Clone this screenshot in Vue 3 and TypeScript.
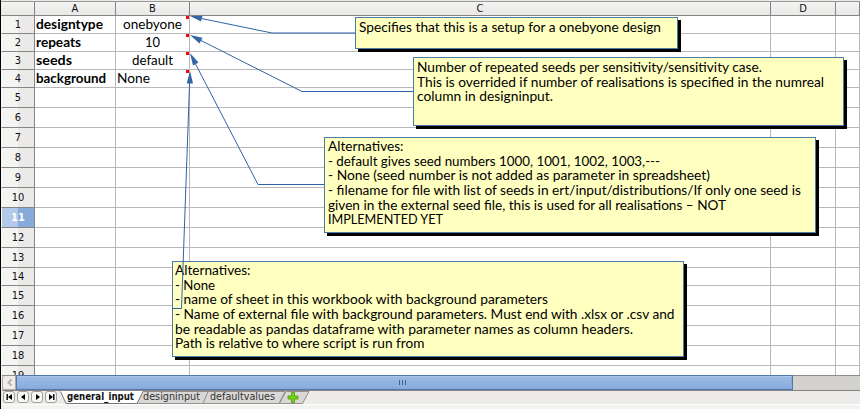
<script setup lang="ts">
interface Line { text: string; width: number; y: number }
interface Note { id: string; w: number; h: number; pad: number; lines: Line[] }

const columns = ['A', 'B', 'C', 'D', '']
const cells: Record<number, [string, string]> = {
  1: ['designtype', 'onebyone'],
  2: ['repeats', '10'],
  3: ['seeds', 'default'],
  4: ['background', 'None'],
}
const cellWidths: Record<number, [number, number]> = {
  1: [67, 59], 2: [45, 15], 3: [36, 41], 4: [70, 33],
}
const rows = Array.from({ length: 19 }, (_, i) => i + 1)
const shortRows = [1, 2, 3, 4, 14]

const notes: Note[] = [
  { id: 'n1', w: 323, h: 32, pad: 4, lines: [
    { text: 'Specifies that this is a setup for a onebyone design', width: 302, y: 15 },
  ] },
  { id: 'n2', w: 431, h: 69, pad: 4, lines: [
    { text: 'Number of repeated seeds per sensitivity/sensitivity case.', width: 345, y: 15 },
    { text: 'This is overrided if number of realisations is specified in the numreal', width: 407, y: 30 },
    { text: 'column in designinput.', width: 136, y: 44 },
  ] },
  { id: 'n3', w: 492, h: 96, pad: 4, lines: [
    { text: 'Alternatives:', width: 75.5, y: 14 },
    { text: '- default gives seed numbers 1000, 1001, 1002, 1003,---', width: 332, y: 29 },
    { text: '- None (seed number is not added as parameter in spreadsheet)', width: 382, y: 43 },
    { text: '- filename for file with list of seeds in ert/input/distributions/If only one seed is', width: 473, y: 58 },
    { text: 'given in the external seed file, this is used for all realisations – NOT', width: 398, y: 73 },
    { text: 'IMPLEMENTED YET', width: 115, y: 87 },
  ] },
  { id: 'n4', w: 512, h: 96, pad: 3, lines: [
    { text: 'Alternatives:', width: 75.5, y: 14 },
    { text: '- None', width: 40, y: 29 },
    { text: '- name of sheet in this workbook with background parameters', width: 373, y: 43 },
    { text: '- Name of external file with background parameters. Must end with .xlsx or .csv and', width: 499.5, y: 58 },
    { text: 'be readable as pandas dataframe with parameter names as column headers.', width: 458, y: 73 },
    { text: 'Path is relative to where script is run from', width: 249.5, y: 87 },
  ] },
]

const connectors = [
  { line: '355,33 272,33 199,18', head: '190,16 202.5,15.8 201,21.5' },
  { line: '413,91.5 302,91.5 198,39', head: '190,35 202.5,37.8 199.5,43.5' },
  { line: '324,184.5 258,184.5 194,61', head: '190,53 198.5,62.5 193,65.5' },
  { line: '172,308.5 181.5,308.5 189.7,80', head: '190,71 193,83.5 186.7,83.5' },
]

const navIcons = [
  'M3.5 3v6h1.4V3zM9 3v6L5 6z',
  'M8 3v6L4 6z',
  'M5 3v6l4-3z',
  'M4 3v6l4-3zM8.1 3v6h1.4V3z',
]
</script>

<template>
  <main class="window">
    <section class="sheet">
      <div class="row header">
        <div class="cell corner"></div>
        <div v-for="(c, i) in columns" :key="i" class="cell col-head">{{ c }}</div>
      </div>
      <div
        v-for="r in rows"
        :key="r"
        class="row"
        :class="{ short: shortRows.includes(r) }"
      >
        <div class="cell row-head" :class="{ active: r === 11 }">{{ r }}</div>
        <div class="cell data bold">
          <svg v-if="cells[r]" :width="cellWidths[r][0]" height="17">
            <text x="0" y="13" :textLength="cellWidths[r][0]" lengthAdjust="spacingAndGlyphs">{{ cells[r][0] }}</text>
          </svg>
        </div>
        <div class="cell data second" :class="{ left: r === 4 }">
          <svg v-if="cells[r]" :width="cellWidths[r][1]" height="17">
            <text x="0" y="13" :textLength="cellWidths[r][1]" lengthAdjust="spacingAndGlyphs">{{ cells[r][1] }}</text>
          </svg>
          <i v-if="cells[r]" class="marker"></i>
        </div>
        <div class="cell data"></div>
        <div class="cell data"></div>
        <div class="cell data"></div>
      </div>

      <div v-for="n in notes" :key="n.id" class="note" :class="n.id">
        <svg :width="n.w - 2" :height="n.h - 2">
          <text
            v-for="l in n.lines"
            :key="l.y"
            :x="n.pad - 1"
            :y="l.y - 1"
            :textLength="l.width"
            lengthAdjust="spacingAndGlyphs"
          >{{ l.text }}</text>
        </svg>
      </div>

      <svg class="connectors" width="860" height="375">
        <g v-for="c in connectors" :key="c.line">
          <polyline :points="c.line" />
          <polygon :points="c.head" />
        </g>
      </svg>
    </section>

    <div class="scrollbar">
      <div class="arrow">
        <svg width="13" height="13"><path d="M8.5 3.5 5.5 6.5l3 3" /></svg>
      </div>
      <div class="thumb"><i></i><i></i><i></i></div>
    </div>

    <footer class="tabs">
      <div class="nav">
        <svg v-for="(d, i) in navIcons" :key="i" width="12" height="12">
          <rect x=".5" y=".5" width="11" height="11" rx="2.5" />
          <path :d="d" />
        </svg>
      </div>
      <svg class="tab-strip" width="254" height="14">
        <path class="tab" d="M82 .5H149L143 12.5H77Z" />
        <path class="tab" d="M148 .5H225L219 12.5H143Z" />
        <path class="tab" d="M226 .5H249L242.5 12.5H219.5Z" />
        <path class="tab selected" d="M.5 0 6 12.5H77L83 0Z" />
        <path class="edge" d="M.5 .5 6 12.5H77L83 .5" />
        <text class="strong" x="7" y="9" textLength="67" lengthAdjust="spacingAndGlyphs">general_input</text>
        <text x="83" y="9" textLength="57" lengthAdjust="spacingAndGlyphs">designinput</text>
        <text x="150" y="9" textLength="65" lengthAdjust="spacingAndGlyphs">defaultvalues</text>
        <path class="plus" d="M231.500 1.500h3v3.500h3.500v3h-3.500v3.500h-3V8H228V5h3.500z" />
      </svg>
    </footer>
  </main>
</template>

<style>
body { background: #f3f2f1; overflow: hidden; }
</style>

<style scoped>
.window {
  box-sizing: border-box;
  width: 860px;
  height: 409px;
  border-left: 1px solid #000;
  background: #f3f3f2;
  overflow: hidden;
  font-family: "DejaVu Sans Condensed", "DejaVu Sans", sans-serif;
}
svg { display: block; }
.sheet {
  position: relative;
  box-sizing: border-box;
  height: 375px;
  padding-top: 1px;
  overflow: hidden;
  background: #ecebea;
}
.row {
  display: grid;
  grid-template-columns: 34px 81px 74px 581px 65px 24px;
  height: 20px;
}
.row.short { height: 18px; }
.row.header { height: 15px; }
.cell {
  box-sizing: border-box;
  border-right: 1px solid #b8b8b8;
  border-bottom: 1px solid #b8b8b8;
}
.header .cell {
  border-top: 1px solid #999;
  border-right-color: #858585;
  border-bottom-color: #858585;
  background: linear-gradient(#f4f4f3, #e9e8e7);
}
.col-head {
  font-size: 11px;
  line-height: 13px;
  text-align: center;
  color: #111;
}
.row-head {
  display: flex;
  align-items: center;
  justify-content: center;
  border-color: #858585;
  border-left: 1px solid #fafafa;
  background: linear-gradient(90deg, #f4f4f3 0 50%, #ebeae9 51%);
  font-size: 11px;
  color: #111;
}
.row-head.active {
  background: linear-gradient(90deg, #b3caea 0 48%, #86aad9 52%);
  color: #fff;
  font-weight: bold;
}
.data {
  position: relative;
  display: flex;
  justify-content: center;
  background: #fff;
  font-family: Lato, Carlito, sans-serif;
  font-size: 14px;
}
.bold, .second.left { justify-content: flex-start; }
.bold { padding-left: 1px; font-weight: bold; }
.second.left { padding-left: 1px; }
.data svg { overflow: visible; }
.marker {
  position: absolute;
  top: 0;
  right: 0;
  width: 3px;
  height: 3px;
  background: #f00;
}
.note {
  position: absolute;
  box-sizing: border-box;
  border: 1px solid #4a7ba9;
  background: #ffffc0;
  box-shadow: 3px 3px 0 #000;
  font-family: Lato, Carlito, sans-serif;
  font-size: 13.5px;
  color: #111;
}
.n1 { left: 354px; top: 17px; }
.n2 { left: 412px; top: 57px; }
.n3 { left: 323px; top: 137px; }
.n4 { left: 171px; top: 261px; }
.connectors { position: absolute; left: -1px; top: 0; }
.connectors polyline { fill: none; stroke: #2f63a8; stroke-width: 1; }
.connectors polygon { fill: #3465a4; }
.scrollbar {
  display: flex;
  box-sizing: border-box;
  height: 16px;
  margin-left: 1px;
  border-top: 1px solid #8e8d8b;
  border-bottom: 1px solid #858482;
  background: #d4d2cf;
}
.arrow {
  box-sizing: border-box;
  width: 14px;
  border: 1px solid #aaa9a7;
  border-top: 0;
  border-radius: 3px 0 0 3px;
  background: #eeedeb;
}
.arrow path { fill: none; stroke: #b5b3b0; stroke-width: 2; }
.thumb {
  display: flex;
  align-items: center;
  justify-content: center;
  gap: 2px;
  box-sizing: border-box;
  width: 777px;
  height: 15px;
  margin-top: -1px;
  padding-right: 4px;
  border: 1px solid #5378ad;
  box-shadow: inset 0 1px #a9c5e9, inset -1px -1px #87a9d8;
  background: linear-gradient(#9dbce5, #86abdc);
}
.thumb i { width: 1px; height: 5px; background: #42638f; }
.tabs {
  display: flex;
  height: 13px;
  border-bottom: 1px solid #fff;
  background: #ecebe9;
}
.nav { display: flex; gap: 2px; padding-left: 2px; width: 57px; }
.nav rect { fill: #f7f7f6; stroke: #a09f9d; }
.nav path { fill: #000; }
.tab-strip { overflow: visible; font-family: "DejaVu Sans", sans-serif; font-size: 10.5px; }
.tab { fill: #d9d8d6; stroke: #92918f; }
.tab.selected { fill: #fff; stroke: none; }
.edge { fill: none; stroke: #777; }
.tab-strip text { fill: #333; }
.tab-strip .strong { fill: #111; font-weight: bold; }
.plus { fill: #73d216; stroke: #4e9a06; stroke-width: .8; }
</style>
